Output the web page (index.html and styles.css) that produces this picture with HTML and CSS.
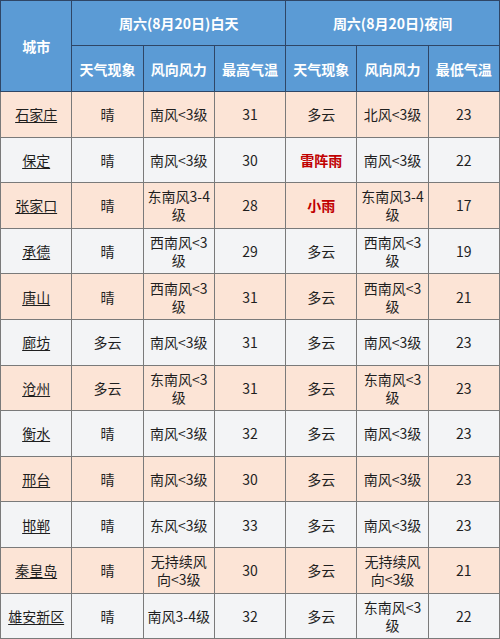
FILE: index.html
```html
<!DOCTYPE html>
<html lang="zh">
<head>
<meta charset="utf-8">
<link rel="stylesheet" href="styles.css">
</head>
<body>
<table class="wx">
  <colgroup>
    <col class="c"><col class="c"><col class="c"><col class="c"><col class="c"><col class="c"><col class="c">
  </colgroup>
  <thead>
    <tr class="h1">
      <th rowspan="2">城市</th>
      <th colspan="3">周六(8月20日)白天</th>
      <th colspan="3">周六(8月20日)夜间</th>
    </tr>
    <tr class="h2">
      <th>天气现象</th><th>风向风力</th><th>最高气温</th>
      <th>天气现象</th><th>风向风力</th><th>最低气温</th>
    </tr>
  </thead>
  <tbody>
    <tr class="odd"><td><span class="city">石家庄</span></td><td>晴</td><td>南风&lt;3级</td><td>31</td><td>多云</td><td>北风&lt;3级</td><td>23</td></tr>
    <tr class="even"><td><span class="city">保定</span></td><td>晴</td><td>南风&lt;3级</td><td>30</td><td class="red">雷阵雨</td><td>南风&lt;3级</td><td>22</td></tr>
    <tr class="odd"><td><span class="city">张家口</span></td><td>晴</td><td>东南风3-4级</td><td>28</td><td class="red">小雨</td><td>东南风3-4级</td><td>17</td></tr>
    <tr class="even"><td><span class="city">承德</span></td><td>晴</td><td>西南风&lt;3级</td><td>29</td><td>多云</td><td>西南风&lt;3级</td><td>19</td></tr>
    <tr class="odd"><td><span class="city">唐山</span></td><td>晴</td><td>西南风&lt;3级</td><td>31</td><td>多云</td><td>西南风&lt;3级</td><td>21</td></tr>
    <tr class="even"><td><span class="city">廊坊</span></td><td>多云</td><td>南风&lt;3级</td><td>31</td><td>多云</td><td>南风&lt;3级</td><td>23</td></tr>
    <tr class="odd"><td><span class="city">沧州</span></td><td>多云</td><td>东南风&lt;3级</td><td>31</td><td>多云</td><td>东南风&lt;3级</td><td>23</td></tr>
    <tr class="even"><td><span class="city">衡水</span></td><td>晴</td><td>南风&lt;3级</td><td>32</td><td>多云</td><td>南风&lt;3级</td><td>23</td></tr>
    <tr class="odd"><td><span class="city">邢台</span></td><td>晴</td><td>南风&lt;3级</td><td>30</td><td>多云</td><td>南风&lt;3级</td><td>23</td></tr>
    <tr class="even"><td><span class="city">邯郸</span></td><td>晴</td><td>东风&lt;3级</td><td>33</td><td>多云</td><td>南风&lt;3级</td><td>23</td></tr>
    <tr class="odd"><td><span class="city">秦皇岛</span></td><td>晴</td><td>无持续风向&lt;3级</td><td>30</td><td>多云</td><td>无持续风向&lt;3级</td><td>21</td></tr>
    <tr class="even"><td><span class="city">雄安新区</span></td><td>晴</td><td>南风3-4级</td><td>32</td><td>多云</td><td>东南风&lt;3级</td><td>22</td></tr>
  </tbody>
</table>
</body>
</html>
```
FILE: styles.css
```css
html, body {
  margin: 0;
  padding: 0;
  background: #ffffff;
}
.wx {
  width: 500px;
  border-collapse: collapse;
  table-layout: fixed;
  font-family: "Noto Sans CJK SC", "Noto Sans", sans-serif;
  font-size: 14px;
  line-height: 18px;
  color: #1f1f1f;
}
.wx th {
  background: #5b9bd5;
  color: #ffffff;
  font-weight: bold;
  font-size: 14px;
  border: 1px solid #2f4666;
  text-align: center;
  padding: 0 3px;
}
.wx tr.h1 { height: 45px; }
.wx tr.h2 { height: 46px; }
.wx td {
  border: 1px solid #7a7a7a;
  text-align: center;
  padding: 0 3px;
  height: 44.6px;
}
.wx tr.odd td { background: #fce4d6; }
.wx tr.even td { background: #f3f4f6; }
.city {
  text-decoration: underline;
  text-underline-offset: 2px;
}
.wx td.red {
  color: #c00000;
  font-weight: bold;
}
```
